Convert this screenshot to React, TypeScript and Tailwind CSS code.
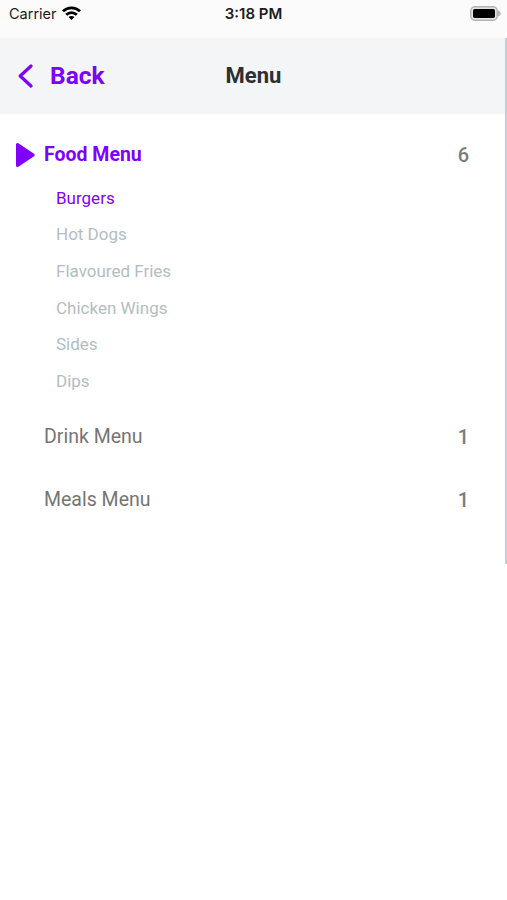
interface MenuSection {
  name: string
  count: number
  items: string[]
}

const sections: MenuSection[] = [
  {
    name: "Food Menu",
    count: 6,
    items: ["Burgers", "Hot Dogs", "Flavoured Fries", "Chicken Wings", "Sides", "Dips"],
  },
  { name: "Drink Menu", count: 1, items: [] },
  { name: "Meals Menu", count: 1, items: [] },
]

function StatusBar() {
  return (
    <div className="grid h-[38px] grid-cols-3 items-start bg-[#fbfbfb] font-['Inter',sans-serif] text-[#1c1c1c]">
      <div className="flex h-7 items-center pl-[9px]">
        <span className="text-[14.5px]">Carrier</span>
        <svg className="mb-[2px] ml-[5px] h-[14px] w-[19px]" viewBox="0 0 19 14" fill="none" stroke="#000" strokeWidth="2.9">
          <path d="M1 5.3C5.8.7 13.2.7 18 5.3" />
          <path d="M4.2 8.8c3-2.9 7.6-2.9 10.6 0" />
          <path d="M9.5 14 6.5 11c1.6-1.5 4.4-1.5 6 0z" fill="#000" stroke="none" />
        </svg>
      </div>
      <div className="flex h-7 items-center justify-center">
        <span className="text-[15px] font-semibold">3:18 PM</span>
      </div>
      <div className="flex h-[26px] items-center justify-end pr-[6px]">
        <svg className="h-[15px] w-[31px]" viewBox="0 0 31 15">
          <rect x="0.8" y="0.8" width="26.4" height="13.4" rx="4" fill="#e4e4e4" stroke="#b5b5b5" strokeWidth="1.5" />
          <rect x="3" y="3" width="22" height="9" rx="1.8" fill="#000" />
          <path d="M28 4.5c1.6.7 2.7 1.7 2.7 3s-1.1 2.3-2.7 3z" fill="#b5b5b5" />
        </svg>
      </div>
    </div>
  )
}

function Header() {
  return (
    <header className="grid h-[76px] grid-cols-3 items-center bg-[#f3f5f7]">
      <button className="flex items-center pl-[18px] text-[#8000ff]">
        <svg className="h-6 w-[15px]" viewBox="0 0 15 24" fill="none" stroke="currentColor" strokeWidth="3.2" strokeLinecap="round" strokeLinejoin="round">
          <path d="M13 2 2.2 12 13 22" />
        </svg>
        <span className="ml-[17px] text-[24.5px] leading-none font-bold">Back</span>
      </button>
      <h1 className="text-center text-[22px] leading-none font-bold text-[#2d2f31]">Menu</h1>
    </header>
  )
}

function Section({ section, open }: { section: MenuSection; open: boolean }) {
  return (
    <section>
      <div className="flex h-[62.4px] items-center pr-[38px]">
        <div className="w-11 pl-[15px]">
          {open && (
            <svg className="h-[26px] w-5" viewBox="0 0 20 26" fill="#8000ff" stroke="#8000ff" strokeWidth="3" strokeLinejoin="round">
              <path d="M2.5 2.5v21L18.2 13z" />
            </svg>
          )}
        </div>
        <span className={open ? "text-[19.5px] font-bold text-[#8000ff]" : "text-[19.5px] text-[#757575]"}>
          {section.name}
        </span>
        <span className="ml-auto pt-px text-[20px] font-medium text-[#7c7c7c]">{section.count}</span>
      </div>
      {section.items.length > 0 && (
        <ul className="-mt-[6px] pb-[6px] pl-14">
          {section.items.map((item, i) => (
            <li
              key={item}
              className={
                i === 0
                  ? "flex h-[36.6px] items-center text-[17px] text-[#8000ff]"
                  : "flex h-[36.6px] items-center text-[17px] text-[#b3bdc3]"
              }
            >
              {item}
            </li>
          ))}
        </ul>
      )}
    </section>
  )
}

export default function App() {
  return (
    <div className="relative h-[900px] w-[507px] overflow-hidden bg-white font-['Roboto',sans-serif]">
      <StatusBar />
      <Header />
      <main className="pt-[9.8px]">
        {sections.map((section, i) => (
          <Section key={section.name} section={section} open={i === 0} />
        ))}
      </main>
      {/* scroll indicator */}
      <div className="absolute top-[38px] right-0 h-[526px] w-[2px] bg-[#c5ced8]" />
    </div>
  )
}
